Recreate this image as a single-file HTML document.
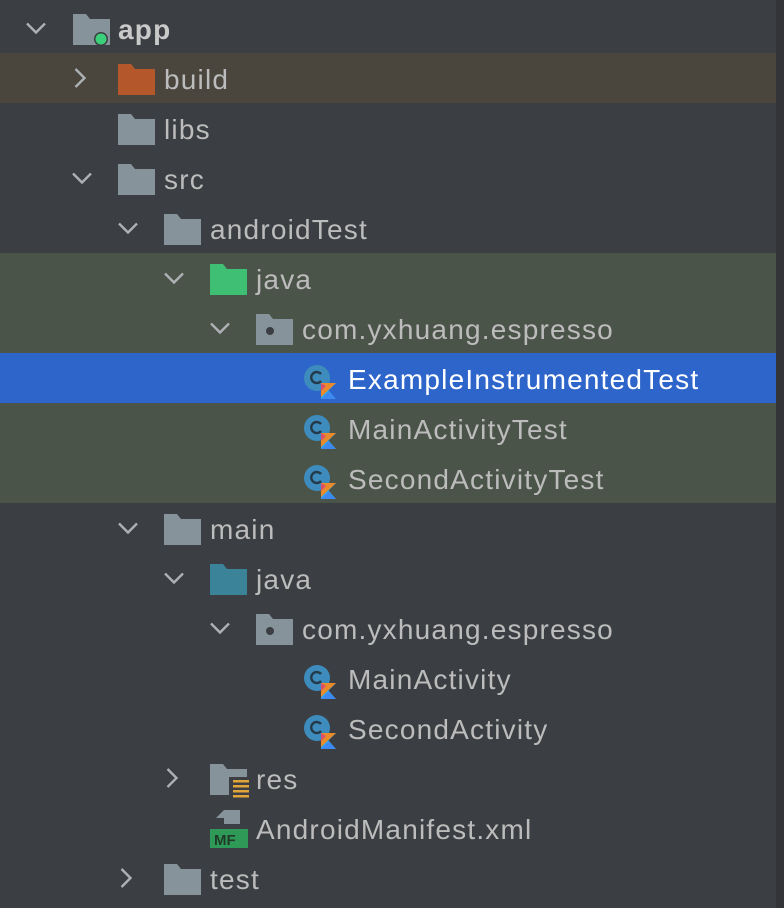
<!DOCTYPE html>
<html><head><meta charset="utf-8"><style>
html,body{margin:0;padding:0}
body{width:784px;height:908px;background:#3b3e42;position:relative;overflow:hidden;font-family:"Liberation Sans",sans-serif}
.strip{position:absolute;right:0;top:0;width:8px;height:908px;background:#323437}
.bg{position:absolute;left:0;width:776px;height:50px}
.t{position:absolute;top:0;line-height:50px;font-size:28px;letter-spacing:1.2px;color:#bcbcbc;white-space:nowrap}
</style></head><body>
<div class="strip"></div>
<div class="bg" style="top:53px;background:#4a463e"></div>
<div class="bg" style="top:253px;height:100px;background:#4b5449"></div>
<div class="bg" style="top:353px;background:#2e65ca"></div>
<div class="bg" style="top:403px;height:100px;background:#4b5449"></div>

<svg width="784" height="908" style="position:absolute;left:0;top:0">
<defs>
<g id="fold"><path d="M0 0h13l4 5h20v26H0z"/></g>
<g id="down"><path d="M-9 -4.5l9 9l9 -9" fill="none" stroke="#adb0b4" stroke-width="2.4"/></g>
<g id="right"><path d="M-4.5 -9l9 9l-9 9" fill="none" stroke="#adb0b4" stroke-width="2.4"/></g>
<g id="cls"><circle cx="0" cy="0" r="13" fill="#3d8cbd"/><path d="M4 -4a5.5 5.5 0 1 0 0 7" fill="none" stroke="#253a48" stroke-width="2.4"/><g transform="translate(4,5)"><polygon points="0,0 15,0 7.5,7.5 15,16 0,16" fill="#2fa7f0"/><polygon points="0,0 15,0 0,14" fill="#e98b2a"/><polygon points="0,16 7.5,8.5 15,16" fill="#3e89f0"/><polygon points="0,8 5,3 0,0" fill="#d8506c"/></g></g>
</defs>
<use href="#down" x="36" y="28"/>
<use href="#right" x="80" y="78"/>
<use href="#down" x="82" y="178"/>
<use href="#down" x="128" y="228"/>
<use href="#down" x="174" y="278"/>
<use href="#down" x="220" y="328"/>
<use href="#down" x="128" y="528"/>
<use href="#down" x="174" y="578"/>
<use href="#down" x="220" y="628"/>
<use href="#right" x="172" y="778"/>
<use href="#right" x="126" y="878"/>
<use href="#fold" x="73" y="14" fill="#87939a"/>
<circle cx="101" cy="39" r="7" fill="#3b3e42"/><circle cx="101" cy="39" r="5.5" fill="#3ccf7a"/>
<use href="#fold" x="118" y="64" fill="#b4582c"/>
<use href="#fold" x="118" y="114" fill="#87939a"/>
<use href="#fold" x="118" y="164" fill="#87939a"/>
<use href="#fold" x="164" y="214" fill="#87939a"/>
<use href="#fold" x="210" y="264" fill="#3ebf74"/>
<use href="#fold" x="256" y="314" fill="#87939a"/>
<circle cx="270" cy="331" r="4" fill="#3b3e42"/>
<use href="#fold" x="164" y="514" fill="#87939a"/>
<use href="#fold" x="210" y="564" fill="#3b8399"/>
<use href="#fold" x="256" y="614" fill="#87939a"/>
<circle cx="270" cy="631" r="4" fill="#3b3e42"/>
<path d="M210 764h13l4 5h20v26H210z" fill="#87939a"/>
<rect x="229" y="777" width="22" height="21" fill="#3b3e42"/>
<g fill="#e0a43a"><rect x="233" y="780" width="16" height="2.5"/><rect x="233" y="785" width="16" height="2.5"/><rect x="233" y="790" width="16" height="2.5"/><rect x="233" y="795" width="16" height="2.5"/></g>
<path d="M224 810h16v14h-16zM216 818l8 -8v8z" fill="#87939a"/>
<rect x="210" y="829" width="38" height="19" fill="#2f9a57"/>
<text x="214" y="845" font-family="Liberation Sans" font-weight="bold" font-size="15" fill="#1f3b28">MF</text>
<use href="#fold" x="164" y="864" fill="#87939a"/>
<use href="#cls" x="317" y="378"/>
<use href="#cls" x="317" y="428"/>
<use href="#cls" x="317" y="478"/>
<use href="#cls" x="317" y="678"/>
<use href="#cls" x="317" y="728"/>
</svg>

<div class="t" style="left:118px;top:5px;font-weight:bold;color:#c9c9c9">app</div>
<div class="t" style="left:164px;top:55px">build</div>
<div class="t" style="left:164px;top:105px">libs</div>
<div class="t" style="left:164px;top:155px">src</div>
<div class="t" style="left:210px;top:205px">androidTest</div>
<div class="t" style="left:256px;top:255px">java</div>
<div class="t" style="left:302px;top:305px">com.yxhuang.espresso</div>
<div class="t" style="left:348px;top:355px;color:#fff">ExampleInstrumentedTest</div>
<div class="t" style="left:348px;top:405px">MainActivityTest</div>
<div class="t" style="left:348px;top:455px">SecondActivityTest</div>
<div class="t" style="left:210px;top:505px">main</div>
<div class="t" style="left:256px;top:555px">java</div>
<div class="t" style="left:302px;top:605px">com.yxhuang.espresso</div>
<div class="t" style="left:348px;top:655px">MainActivity</div>
<div class="t" style="left:348px;top:705px">SecondActivity</div>
<div class="t" style="left:256px;top:755px">res</div>
<div class="t" style="left:256px;top:805px">AndroidManifest.xml</div>
<div class="t" style="left:210px;top:855px">test</div>
</body></html>
